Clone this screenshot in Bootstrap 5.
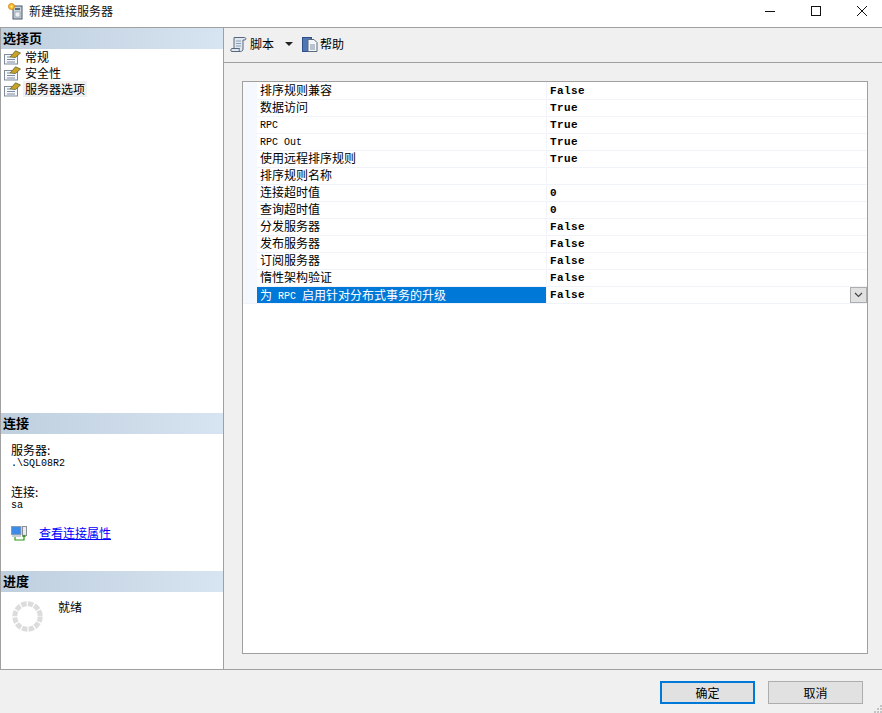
<!DOCTYPE html>
<html lang="zh-CN">
<head>
<meta charset="utf-8">
<title>新建链接服务器</title>
<link href="https://cdn.jsdelivr.net/npm/bootstrap@5.3.0/dist/css/bootstrap.min.css" rel="stylesheet">
<style>
html,body{height:713px;overflow:hidden}
body{font-family:"Noto Sans CJK SC","Liberation Sans",sans-serif;font-size:12px;line-height:16px;color:#000;background:#f0f0f0}
.dlg{width:882px;height:713px;position:relative;overflow:hidden}
.titlebar{height:28px;background:#fff;border-bottom:1px solid #a0a0a0;padding:0 0 5px 8px}
.titletxt{margin-left:6px;color:#111}
.winbtns{margin-right:-3px}
.winbtn{width:46px;height:22px}
.mainarea{height:642px;border-bottom:1px solid #a0a0a0}
.leftpane{width:224px;background:#fff;border-left:1px solid #a0a0a0;border-right:1px solid #a0a0a0}
.sec1{height:385px}.sec2{height:158px}.sec3{height:98px}
.sechead{height:21px;line-height:20px;background:linear-gradient(90deg,#bfcfde,#d7e4f1);font-weight:700;font-size:13px;padding-left:2px}
.navrow{height:16px;padding-left:3px}
.navlabel{margin-left:2px;padding:0 2px;height:16px}
.navsel{background:#f0f0f0}
.infolabel{line-height:13px}
.mono{font-family:"Liberation Mono",monospace;font-size:10px;line-height:10px;margin-top:3px}
.infoblock{padding:9px 0 0 10px}
.gap-info{height:16px}
.linkrow{margin-top:14px}
.linkrow a{color:#00f;margin-left:12px}
.progrow{padding:9px 0 0 11px}
.progtxt{margin-left:15px;margin-top:-2px}
.rightpane{width:658px}
.toolbar{height:36px;border-bottom:1px solid #a0a0a0;padding:0 0 2px 6px}
.tbtxt{margin-left:2px}
.tbtxt-first{margin-left:3px}
.tbarrow{width:0;height:0;border-left:4px solid transparent;border-right:4px solid transparent;border-top:4px solid #222;margin:0 9px 0 11px}
.gridwrap{padding:18px 14px 15px 18px;height:606px}
.gridbox{height:573px;background:#fff;border:1px solid #a0a0a0;padding-top:1px}
.prow{height:17px;border-bottom:1px solid #f0f4fa;line-height:16px}
.pgut{width:14px;background:#f5f8fc;flex:none;margin-top:-1px}
.pname{width:290px;padding-left:3px;flex:none;border-right:1px solid #f0f4fa;height:16px;white-space:nowrap;margin-top:-1px}
.pval{padding:1px 0 0 3px;margin-top:-1px;font-family:"Liberation Mono",monospace;font-weight:700;font-size:11px;letter-spacing:.4px;flex:1 1 auto}
.latin{font-family:"Liberation Mono",monospace;font-size:10px;vertical-align:1px;white-space:pre}
.psel{background:#0078d7;color:#fff;margin-top:0;line-height:15px}
.ddbtn{width:17px;height:16px;background:#e1e1e1;border:1px solid #adadad}
.footbar{height:43px;padding:11px 19px 0 0}
.dlgbtn{width:95px;height:23px;background:#e1e1e1;border:1px solid #adadad;border-radius:0;padding:0;font-size:12px;line-height:20px;color:#000}
.dlgbtn-def{border:2px solid #0078d7;margin-right:13px}
.grip{position:absolute;right:0;bottom:0}
</style>
</head>
<body>
<div class="dlg d-flex flex-column">
  <div class="titlebar d-flex align-items-center">
    <svg width="15" height="17" viewBox="0 0 15 17"><rect x="5" y="3" width="9" height="13" fill="#c9d3dc" stroke="#46586a"/><rect x="7" y="5" width="5" height="2" fill="#5b6f83"/><rect x="7" y="9" width="5" height="5" fill="#eef2f5" stroke="#7c8b99" stroke-width=".6"/><circle cx="3.5" cy="3.5" r="3" fill="#f3c230" stroke="#d98a1c"/><circle cx="3.5" cy="3.5" r="1" fill="#fff2a8"/></svg>
    <span class="titletxt">新建链接服务器</span>
    <div class="ms-auto d-flex winbtns">
      <div class="winbtn d-flex align-items-center justify-content-center"><svg width="10" height="10"><path d="M0 5.5H10" stroke="#111"/></svg></div>
      <div class="winbtn d-flex align-items-center justify-content-center"><svg width="10" height="10"><rect x=".5" y=".5" width="9" height="9" fill="none" stroke="#111"/></svg></div>
      <div class="winbtn d-flex align-items-center justify-content-center"><svg width="10" height="10"><path d="M0 0L10 10M10 0L0 10" stroke="#111"/></svg></div>
    </div>
  </div>
  <div class="mainarea d-flex">
    <div class="leftpane d-flex flex-column">
      <div class="sec1">
        <div class="sechead">选择页</div>
        <div class="navrow d-flex align-items-center">
          <svg width="17" height="15" viewBox="0 0 17 15"><rect x=".5" y="4.5" width="13" height="9.5" fill="#f6f8fb" stroke="#7f8b99"/><path d="M3 7H6M3 9.5H11M3 12H11" stroke="#7b8ba8"/><path d="M6 7L11.5 .8L16.5 3L11.5 7.5Z" fill="#c9a227" stroke="#62642c" stroke-width=".8"/></svg>
          <span class="navlabel">常规</span>
        </div>
        <div class="navrow d-flex align-items-center">
          <svg width="17" height="15" viewBox="0 0 17 15"><rect x=".5" y="4.5" width="13" height="9.5" fill="#f6f8fb" stroke="#7f8b99"/><path d="M3 7H6M3 9.5H11M3 12H11" stroke="#7b8ba8"/><path d="M6 7L11.5 .8L16.5 3L11.5 7.5Z" fill="#c9a227" stroke="#62642c" stroke-width=".8"/></svg>
          <span class="navlabel">安全性</span>
        </div>
        <div class="navrow d-flex align-items-center">
          <svg width="17" height="15" viewBox="0 0 17 15"><rect x=".5" y="4.5" width="13" height="9.5" fill="#f6f8fb" stroke="#7f8b99"/><path d="M3 7H6M3 9.5H11M3 12H11" stroke="#7b8ba8"/><path d="M6 7L11.5 .8L16.5 3L11.5 7.5Z" fill="#c9a227" stroke="#62642c" stroke-width=".8"/></svg>
          <span class="navlabel navsel">服务器选项</span>
        </div>
      </div>
      <div class="sec2">
        <div class="sechead">连接</div>
        <div class="infoblock">
          <div class="infolabel">服务器:</div>
          <div class="mono">.\SQL08R2</div>
          <div class="gap-info"></div>
          <div class="infolabel">连接:</div>
          <div class="mono">sa</div>
          <div class="linkrow d-flex align-items-center">
            <svg width="16" height="16" viewBox="0 0 16 16"><rect x=".5" y="1.5" width="9.5" height="8" fill="#3d8be8" stroke="#8b9bb0"/><rect x="1" y="10" width="9" height="2" fill="#c7ced6"/><rect x="11.5" y="1.5" width="4" height="9" fill="#e8ecef" stroke="#8b8f94"/><path d="M4 12V15H13V11" fill="none" stroke="#2f9a14" stroke-width="1.2"/><path d="M11 12L13 9.5L15 12Z" fill="#2f9a14"/></svg>
            <a href="#">查看连接属性</a>
          </div>
        </div>
      </div>
      <div class="sec3">
        <div class="sechead">进度</div>
        <div class="progrow d-flex">
          <svg width="31" height="31" viewBox="0 0 31 31"><circle cx="15.5" cy="15.5" r="12.7" fill="none" stroke="#dcdcdc" stroke-width="5" stroke-dasharray="5.4 1.25"/></svg>
          <span class="progtxt">就绪</span>
        </div>
      </div>
    </div>
    <div class="rightpane d-flex flex-column">
      <div class="toolbar d-flex align-items-center">
        <svg width="17" height="17" viewBox="0 0 17 17"><path d="M4 1.5H14.5C16 1.5 16.5 3.5 15 4H13V13C13 14.5 12 15.5 10.5 15.5H2C.3 15.5 .2 13 2 12.5H4V3C4 2.5 4 2 4 1.5Z" fill="#dfe6ee" stroke="#56687e"/><path d="M6 5H11M6 7.5H11M6 10H11" stroke="#8aa0b8"/><path d="M4 12.5H9.5C9 13.5 9 14.5 10 15.5" fill="none" stroke="#56687e"/></svg>
        <span class="tbtxt-first">脚本</span>
        <span class="tbarrow"></span>
        <svg width="16" height="17" viewBox="0 0 16 17"><rect x=".5" y="1.5" width="9" height="14" fill="#4f76b5" stroke="#2e4f87"/><path d="M6 3.5H12L15 6.5V15.5H6Z" fill="#f4f6f8" stroke="#5a6a7d"/><path d="M8 9H13M8 11H13M8 13H13" stroke="#7f90a6"/></svg>
        <span class="tbtxt">帮助</span>
      </div>
      <div class="gridwrap">
        <div class="gridbox">
          <div class="prow d-flex"><div class="pgut"></div><div class="pname">排序规则兼容</div><div class="pval">False</div></div>
          <div class="prow d-flex"><div class="pgut"></div><div class="pname">数据访问</div><div class="pval">True</div></div>
          <div class="prow d-flex"><div class="pgut"></div><div class="pname"><span class="latin">RPC</span></div><div class="pval">True</div></div>
          <div class="prow d-flex"><div class="pgut"></div><div class="pname"><span class="latin">RPC Out</span></div><div class="pval">True</div></div>
          <div class="prow d-flex"><div class="pgut"></div><div class="pname">使用远程排序规则</div><div class="pval">True</div></div>
          <div class="prow d-flex"><div class="pgut"></div><div class="pname">排序规则名称</div><div class="pval"></div></div>
          <div class="prow d-flex"><div class="pgut"></div><div class="pname">连接超时值</div><div class="pval">0</div></div>
          <div class="prow d-flex"><div class="pgut"></div><div class="pname">查询超时值</div><div class="pval">0</div></div>
          <div class="prow d-flex"><div class="pgut"></div><div class="pname">分发服务器</div><div class="pval">False</div></div>
          <div class="prow d-flex"><div class="pgut"></div><div class="pname">发布服务器</div><div class="pval">False</div></div>
          <div class="prow d-flex"><div class="pgut"></div><div class="pname">订阅服务器</div><div class="pval">False</div></div>
          <div class="prow d-flex"><div class="pgut"></div><div class="pname">惰性架构验证</div><div class="pval">False</div></div>
          <div class="prow d-flex"><div class="pgut"></div><div class="pname psel">为<span class="latin"> RPC </span>启用针对分布式事务的升级</div><div class="pval">False</div>
            <div class="ddbtn d-flex align-items-center justify-content-center"><svg width="9" height="6"><path d="M1 1L4.5 4.5L8 1" fill="none" stroke="#444" stroke-width="1.2"/></svg></div>
          </div>
        </div>
      </div>
    </div>
  </div>
  <div class="footbar d-flex justify-content-end">
    <button type="button" class="btn dlgbtn dlgbtn-def">确定</button>
    <button type="button" class="btn dlgbtn">取消</button>
  </div>
  <svg class="grip" width="8" height="8"><g fill="#c4c4c4"><rect x="6" y="0" width="2" height="2"/><rect x="3" y="3" width="2" height="2"/><rect x="6" y="3" width="2" height="2"/><rect x="0" y="6" width="2" height="2"/><rect x="3" y="6" width="2" height="2"/><rect x="6" y="6" width="2" height="2"/></g></svg>
</div>
<script src="https://cdn.jsdelivr.net/npm/bootstrap@5.3.0/dist/js/bootstrap.bundle.min.js"></script>
</body>
</html>
